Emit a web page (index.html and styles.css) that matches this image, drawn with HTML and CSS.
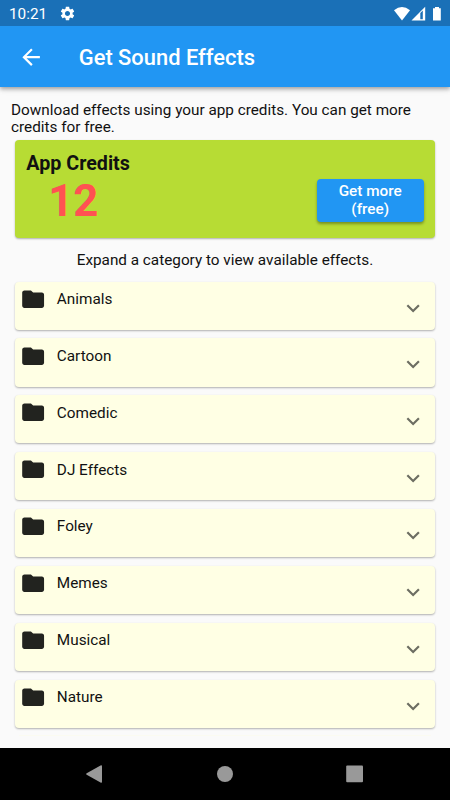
FILE: index.html
```html
<!DOCTYPE html>
<html lang="en">
<head>
<meta charset="utf-8">
<title>Get Sound Effects</title>
<link rel="stylesheet" href="styles.css">
</head>
<body>
<svg width="0" height="0" class="defs">
  <symbol id="folder" viewBox="0 0 24 24"><path d="M10 4H4c-1.1 0-1.99.9-1.99 2L2 18c0 1.1.9 2 2 2h16c1.1 0 2-.9 2-2V8c0-1.100-.9-2-2-2h-8l-2-2z"/></symbol>
  <symbol id="chevron" viewBox="0 0 24 24"><path d="M16.590 8.590L12 13.170 7.410 8.590 6 10l6 6 6-6z"/></symbol>
</svg>
<div class="screen">
  <div class="status">
    <span class="time">10:21</span>
    <svg class="gear" viewBox="0 0 24 24"><path d="M19.140 12.940c.04-.3.060-.61.060-.94 0-.32-.02-.64-.07-.94l2.030-1.580c.18-.14.230-.41.120-.61l-1.920-3.320c-.12-.22-.37-.29-.59-.22l-2.390.96c-.5-.38-1.030-.7-1.620-.94l-.36-2.540c-.04-.24-.24-.41-.48-.41h-3.840c-.24 0-.43.17-.47.41l-.36 2.540c-.59.24-1.130.57-1.620.94l-2.390-.96c-.22-.08-.47 0-.59.22L2.740 8.870c-.12.210-.08.470.12.610l2.030 1.580c-.05.3-.09.63-.09.94s.02.640.070.940l-2.030 1.580c-.18.140-.23.410-.12.610l1.920 3.320c.12.220.37.290.59.220l2.390-.96c.5.380 1.030.7 1.620.940l.36 2.540c.05.240.24.410.48.410h3.840c.24 0 .44-.17.470-.41l.36-2.540c.59-.24 1.130-.56 1.620-.94l2.390.96c.22.080.47 0 .59-.22l1.920-3.320c.12-.22.070-.47-.12-.61l-2.010-1.580zM12 15.600c-1.980 0-3.600-1.620-3.600-3.600s1.620-3.600 3.600-3.600 3.600 1.620 3.600 3.600-1.620 3.600-3.600 3.600z"/></svg>
    <svg class="signals" viewBox="0 0 50 16">
      <path d="M0 4.200Q8 -2.200 16 4.200L8 14.500Z"/>
      <path fill-rule="evenodd" d="M17.500 14.500L31.200 .8V14.500ZM26.300 13.200H28.800V4.500L26.300 7Z"/>
      <path d="M39 2.300h2V.9h4v1.400h1.800V14.500H39Z"/>
    </svg>
  </div>
  <header class="appbar">
    <svg class="back" viewBox="0 0 24 24"><path d="M20 11H7.830l5.590-5.590L12 4l-8 8 8 8 1.410-1.410L7.830 13H20v-2z"/></svg>
    <h1>Get Sound Effects</h1>
  </header>
  <main>
    <p class="intro">Download effects using your app credits. You can get more credits for free.</p>
    <section class="credits">
      <div>
        <h2>App Credits</h2>
        <div class="count">12</div>
      </div>
      <button>Get more<br>(free)</button>
    </section>
    <p class="hint">Expand a category to view available effects.</p>
    <div class="list">
      <div class="row"><svg class="folder"><use href="#folder"/></svg><span>Animals</span><svg class="chevron"><use href="#chevron"/></svg></div>
      <div class="row"><svg class="folder"><use href="#folder"/></svg><span>Cartoon</span><svg class="chevron"><use href="#chevron"/></svg></div>
      <div class="row"><svg class="folder"><use href="#folder"/></svg><span>Comedic</span><svg class="chevron"><use href="#chevron"/></svg></div>
      <div class="row"><svg class="folder"><use href="#folder"/></svg><span>DJ Effects</span><svg class="chevron"><use href="#chevron"/></svg></div>
      <div class="row"><svg class="folder"><use href="#folder"/></svg><span>Foley</span><svg class="chevron"><use href="#chevron"/></svg></div>
      <div class="row"><svg class="folder"><use href="#folder"/></svg><span>Memes</span><svg class="chevron"><use href="#chevron"/></svg></div>
      <div class="row"><svg class="folder"><use href="#folder"/></svg><span>Musical</span><svg class="chevron"><use href="#chevron"/></svg></div>
      <div class="row"><svg class="folder"><use href="#folder"/></svg><span>Nature</span><svg class="chevron"><use href="#chevron"/></svg></div>
    </div>
    <div class="edge"></div>
  </main>
  <nav>
    <svg viewBox="0 0 24 24"><path d="M3.700 12.800Q2.300 12 3.700 11.200L17.500 3.500Q19 2.800 19 4.300V19.700Q19 21.200 17.500 20.500Z"/></svg>
    <svg viewBox="0 0 24 24"><circle cx="12" cy="12" r="8"/></svg>
    <svg viewBox="0 0 24 24"><rect x="3.200" y="3.500" width="16.800" height="16.800" rx="1"/></svg>
  </nav>
</div>
</body>
</html>
```

FILE: styles.css
```css
* { box-sizing: border-box; }
body, h1, h2, p { margin: 0; }
body { font-family: Roboto, sans-serif; color: #111; }
.defs { position: absolute; }
svg { display: block; flex: none; }

.screen {
  width: 450px;
  height: 800px;
  display: flex;
  flex-direction: column;
  overflow: hidden;
  background: #fafafa;
}

.status {
  height: 26px;
  flex: none;
  display: flex;
  align-items: center;
  padding: 1px 8px 0 9px;
  background: #1a70b7;
  color: #fff;
  fill: #fff;
  z-index: 2;
}
.time { font-size: 15.3px; width: 50px; }
.gear { width: 17px; height: 17px; }
.signals { width: 50px; height: 16px; margin-left: auto; margin-right: -2px; }

.appbar {
  height: 61px;
  flex: none;
  display: flex;
  align-items: center;
  padding-left: 17.5px;
  background: #2196f3;
  color: #fff;
  fill: #fff;
  box-shadow: 0 2px 4px rgba(0, 0, 0, .3), 0 1px 8px rgba(0, 0, 0, .12);
  z-index: 1;
}
.back { width: 26.25px; height: 26.25px; margin-top: 1px; }
h1 {
  margin: 2px 0 0 35px;
  font-size: 21.9px;
  font-weight: 500;
}

main { flex: 1; padding: 14.6px 15.3px 0; }
.intro, .hint, .row {
  font-size: 15.3px;
  line-height: 17.5px;
}
.intro { margin: 0 -4.3px 3.8px; }

.credits {
  height: 97.5px;
  display: flex;
  justify-content: space-between;
  padding: 11.7px 11px 0 11px;
  border-radius: 4px;
  background: #b7dc34;
  box-shadow: 0 1px 2px rgba(0, 0, 0, .3);
}
h2 { font-size: 19.7px; line-height: 23px; font-weight: 700; }
.count {
  margin: .6px 0 0 22px;
  font-size: 43.7px;
  line-height: 50px;
  font-weight: 700;
  color: #ff5252;
}
button {
  width: 107px;
  height: 43.75px;
  margin-top: 26.6px;
  padding: .6px 0 0;
  border: 0;
  border-radius: 4px;
  background: #2196f3;
  color: #fff;
  font: 500 15.3px/17.5px Roboto, sans-serif;
  box-shadow: 0 2px 3px rgba(0, 0, 0, .35);
}
.hint { margin-top: 13.7px; text-align: center; }

.list {
  display: flex;
  flex-direction: column;
  gap: 8.75px;
  margin-top: 12.5px;
}
.row {
  height: 48.12px;
  display: flex;
  padding: 4.1px 8.75px 0 4.3px;
  border-radius: 4px;
  background: #ffffe4;
  box-shadow: 0 1px 2px rgba(0, 0, 0, .3);
}
.row span { flex: 1; margin: 5.35px 0 0 11px; }
.folder { width: 26.25px; height: 26.25px; fill: #22231f; }
.chevron { width: 26.25px; height: 26.25px; margin-top: 8.9px; fill: #6d6e62; }
.edge { height: 1px; margin: 7.5px 4px 0; background: #fbfbf1; }

nav {
  height: 52.5px;
  flex: none;
  display: flex;
  justify-content: center;
  align-items: center;
  gap: 106px;
  background: #000;
  fill: #999;
}
nav svg { width: 24px; height: 24px; }
```
